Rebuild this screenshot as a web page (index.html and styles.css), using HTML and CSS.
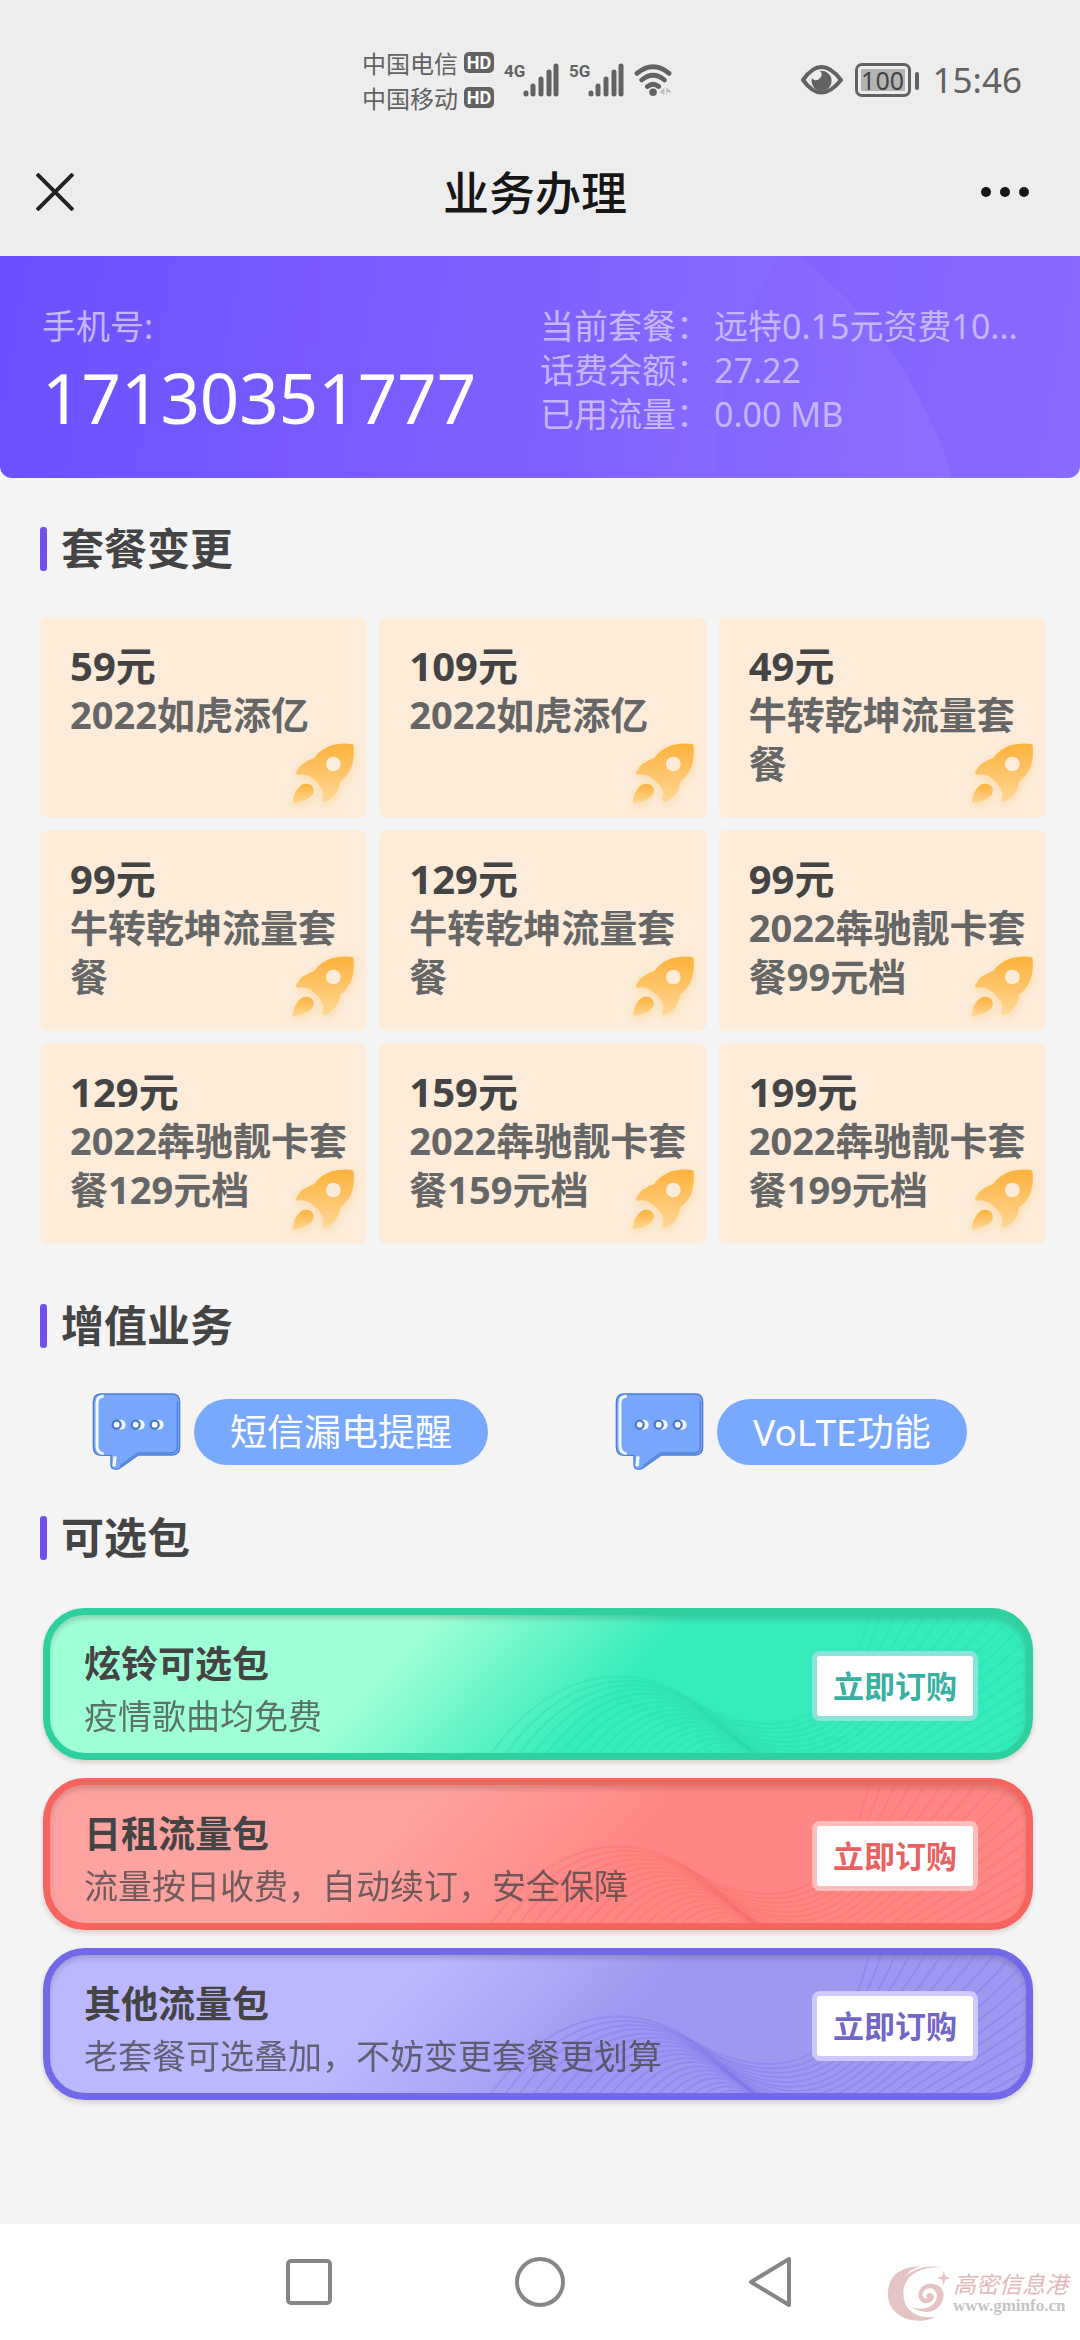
FILE: index.html
```html
<!DOCTYPE html>
<html lang="zh-CN">
<head>
<meta charset="utf-8">
<meta name="viewport" content="width=device-width, initial-scale=1">
<title>业务办理</title>
<link rel="stylesheet" href="styles.css">
</head>
<body>
<svg class="defs" aria-hidden="true">
  <defs>
    <linearGradient id="rocket-fill" x1="0" y1="0" x2="0" y2="1">
      <stop offset="0" stop-color="#fdb23c"/><stop offset="1" stop-color="#ffd694"/>
    </linearGradient>
    <symbol id="rocket" viewBox="60 55 210 201">
      <g fill="url(#rocket-fill)">
        <path d="M246 67Q251 68 251 74Q254 112 243 140Q232 164 210 180Q208 205 192 222Q178 236 164 240Q156 241 157 232Q163 219 158 205Q146 183 118 163Q102 155 84 159Q76 158 79 150Q92 122 133 109Q152 82 185 71Q215 63 246 67Z"/>
        <path d="M76 244Q67 247 69 237Q74 206 94 190Q108 182 123 190Q136 199 129 217Q118 236 76 244Z"/>
      </g>
      <circle cx="190" cy="127" r="22" fill="#fcecd9"/>
    </symbol>
    <symbol id="chat" viewBox="215 310 267 231">
      <path d="M240 313H456Q478 313 478 337V472Q478 496 456 496H354L296 537Q272 543 272 526V497H242Q219 496 219 472V337Q219 315 240 313Z" fill="#78a6fb" stroke="#4b7fd6" stroke-width="4"/>
      <path d="M250 319Q230 320 230 340V468Q230 490 250 492" fill="none" stroke="#f2f8ff" stroke-width="9"/>
      <path d="M284 500L281 530" stroke="#f2f8ff" stroke-width="10"/>
      <path d="M471 334V474Q470 489 452 490H352L300 528" fill="none" stroke="#4f82d8" stroke-width="4"/>
      <g fill="#f2f8ff"><circle cx="301" cy="405" r="15"/><circle cx="358" cy="405" r="15"/><circle cx="415" cy="405" r="15"/></g>
      <g fill="#fff" stroke="#4679d2" stroke-width="7"><circle cx="289" cy="405" r="12"/><circle cx="346" cy="405" r="12"/><circle cx="403" cy="405" r="12"/></g>
    </symbol>
    <symbol id="signal" viewBox="0 0 36 34">
      <g stroke="currentColor" stroke-width="5" stroke-linecap="round"><path d="M3 30V31M10 23V31M18 16V31M26 9V31M33 3V31"/></g>
    </symbol>
  </defs>
</svg>

<div class="page">
  <div class="top">
    <div class="status">
      <div class="carriers">
        <div class="carrier">中国电信<span class="hd">HD</span></div>
        <div class="carrier">中国移动<span class="hd">HD</span></div>
      </div>
      <div class="network"><span class="gen">4G</span><svg class="signal"><use href="#signal"/></svg></div>
      <div class="network"><span class="gen">5G</span><svg class="signal"><use href="#signal"/></svg></div>
      <svg class="wifi" viewBox="0 0 42 36">
        <g fill="none" stroke="#626262" stroke-width="5" stroke-linecap="round"><path d="M3 11Q20 -3 37 11M8 18Q20 8 32 18M14 25Q20 20 26 25"/></g>
        <circle cx="20" cy="31" r="4" fill="#626262"/>
        <path d="M27 31L32 26V34M34 35V26L40 31H35" fill="#bdbdbd"/>
      </svg>
      <div class="status-right">
        <svg class="eye" viewBox="0 0 42 30">
          <path d="M2 15Q20 -11 40 15Q20 40 2 15Z" fill="none" stroke="#626262" stroke-width="4" stroke-linejoin="round"/>
          <path d="M19 6A10 10 0 1 1 11 13Q14 17 18 14Q23 10 19 6Z" fill="#626262"/>
        </svg>
        <div class="battery"><span class="level">100</span></div>
        <span class="clock">15:46</span>
      </div>
    </div>
    <header class="titlebar">
      <button class="icon-btn" aria-label="关闭"><svg width="38" height="38" viewBox="0 0 38 38"><path d="M1 1L37 37M37 1L1 37" stroke="#222" stroke-width="4"/></svg></button>
      <h1 class="title">业务办理</h1>
      <button class="icon-btn more" aria-label="更多"><svg width="50" height="12" viewBox="0 0 50 12"><g fill="#161616"><circle cx="6" cy="6" r="5"/><circle cx="25" cy="6" r="5"/><circle cx="44" cy="6" r="5"/></g></svg></button>
    </header>
  </div>

  <section class="account">
    <svg class="account-art" viewBox="0 0 1080 222" preserveAspectRatio="xMaxYMid slice" aria-hidden="true">
      <defs>
        <linearGradient id="disc" x1="0" y1="0" x2="1" y2="0"><stop offset=".5" stop-color="#fff" stop-opacity="0"/><stop offset="1" stop-color="#fff" stop-opacity=".07"/></linearGradient>
      </defs>
      <circle cx="544" cy="341" r="425" fill="url(#disc)"/>
      <circle cx="1136" cy="222" r="421" fill="#7a58ff" fill-opacity=".14"/>
    </svg>
    <div class="phone">
      <span class="muted">手机号:</span>
      <strong class="number">17130351777</strong>
    </div>
    <dl class="facts muted">
      <dt>当前套餐：</dt><dd>远特0.15元资费10...</dd>
      <dt>话费余额：</dt><dd>27.22</dd>
      <dt>已用流量：</dt><dd>0.00 MB</dd>
    </dl>
  </section>

  <main>
    <h2 class="section-title">套餐变更</h2>
    <div class="plans">
      <button class="plan"><b>59元</b><span>2022如虎添亿</span><svg class="rocket"><use href="#rocket"/></svg></button>
      <button class="plan"><b>109元</b><span>2022如虎添亿</span><svg class="rocket"><use href="#rocket"/></svg></button>
      <button class="plan"><b>49元</b><span>牛转乾坤流量套餐</span><svg class="rocket"><use href="#rocket"/></svg></button>
      <button class="plan"><b>99元</b><span>牛转乾坤流量套餐</span><svg class="rocket"><use href="#rocket"/></svg></button>
      <button class="plan"><b>129元</b><span>牛转乾坤流量套餐</span><svg class="rocket"><use href="#rocket"/></svg></button>
      <button class="plan"><b>99元</b><span>2022犇驰靓卡套餐99元档</span><svg class="rocket"><use href="#rocket"/></svg></button>
      <button class="plan"><b>129元</b><span>2022犇驰靓卡套餐129元档</span><svg class="rocket"><use href="#rocket"/></svg></button>
      <button class="plan"><b>159元</b><span>2022犇驰靓卡套餐159元档</span><svg class="rocket"><use href="#rocket"/></svg></button>
      <button class="plan"><b>199元</b><span>2022犇驰靓卡套餐199元档</span><svg class="rocket"><use href="#rocket"/></svg></button>
    </div>

    <h2 class="section-title">增值业务</h2>
    <div class="services">
      <div class="service"><svg class="chat"><use href="#chat"/></svg><button class="pill">短信漏电提醒</button></div>
      <div class="service"><svg class="chat"><use href="#chat"/></svg><button class="pill">VoLTE功能</button></div>
    </div>

    <h2 class="section-title">可选包</h2>
    <div class="packs">
      <article class="pack green">
        <svg class="waves" viewBox="0 0 976 138" preserveAspectRatio="xMaxYMid slice" aria-hidden="true"></svg>
        <div class="pack-text"><h3>炫铃可选包</h3><p>疫情歌曲均免费</p></div>
        <button class="order">立即订购</button>
      </article>
      <article class="pack red">
        <svg class="waves" viewBox="0 0 976 138" preserveAspectRatio="xMaxYMid slice" aria-hidden="true"></svg>
        <div class="pack-text"><h3>日租流量包</h3><p>流量按日收费，自动续订，安全保障</p></div>
        <button class="order">立即订购</button>
      </article>
      <article class="pack violet">
        <svg class="waves" viewBox="0 0 976 138" preserveAspectRatio="xMaxYMid slice" aria-hidden="true"></svg>
        <div class="pack-text"><h3>其他流量包</h3><p>老套餐可选叠加，不妨变更套餐更划算</p></div>
        <button class="order">立即订购</button>
      </article>
    </div>
  </main>

  <nav class="navbar">
    <button class="icon-btn" aria-label="最近任务"><svg width="54" height="54" viewBox="0 0 54 54"><rect x="6" y="6" width="42" height="42" rx="3" fill="none" stroke="#868686" stroke-width="4"/></svg></button>
    <button class="icon-btn" aria-label="主页"><svg width="54" height="54" viewBox="0 0 54 54"><circle cx="27" cy="27" r="23" fill="none" stroke="#868686" stroke-width="4"/></svg></button>
    <button class="icon-btn" aria-label="返回"><svg width="54" height="54" viewBox="0 0 54 54"><path d="M45 4V50L7 27Z" fill="none" stroke="#868686" stroke-width="4" stroke-linejoin="round"/></svg></button>
    <div class="watermark">
      <svg width="64" height="58" viewBox="0 0 192 172">
        <g fill="#e6c3c3">
          <path d="M100 5Q20 10 6 62Q-10 130 50 160Q100 180 145 158Q80 165 55 120Q35 60 80 28Q120 4 165 10Q120 0 80 20Q60 28 48 44Q68 14 100 5Z"/>
          <path d="M88 5Q30 14 12 52Q40 12 88 5Z"/>
          <path d="M72 128Q130 160 160 122Q184 80 150 62Q118 48 98 76Q86 104 110 116Q134 120 142 98Q138 84 124 86Q114 92 122 102Q106 104 106 90Q112 70 134 72Q156 84 146 110Q124 144 72 128Z"/>
          <path d="M170 20L175 36L190 41L175 46L169 62L166 46L150 41L166 36Z"/>
        </g>
      </svg>
      <div class="wm-text"><span class="wm-name">高密信息港</span><span class="wm-url">www.gminfo.cn</span></div>
    </div>
  </nav>
</div>
<script src="waves.js"></script>
</body>
</html>
```
FILE: styles.css
```css
* { box-sizing: border-box; margin: 0; padding: 0; }
body {
  background: #f4f4f4;
  color: #444;
  font-family: "Noto Sans", "Noto Sans CJK SC", sans-serif;
}
button { font: inherit; color: inherit; border: 0; background: none; cursor: pointer; }
.defs { position: absolute; width: 0; height: 0; }
.page { min-height: 100vh; display: flex; flex-direction: column; }

/* status bar and title */
.top { background: #ededed; }
.status {
  height: 128px;
  padding: 32px 58px 0 362px;
  display: flex;
  align-items: center;
  color: #626262;
}
.carriers { margin-right: 10px; }
.carrier {
  display: flex; align-items: center; gap: 6px;
  font: 24px/35px "Noto Sans CJK SC", sans-serif;
}
.hd {
  width: 30px; height: 21px; border-radius: 5px;
  background: #626262; color: #fff;
  font: bold 18px/21px "Roboto", sans-serif;
  text-align: center;
}
.network { display: flex; align-items: flex-start; margin-right: 10px; }
.gen { width: 19px; font: bold 17px/17px "Roboto", sans-serif; }
.signal { width: 36px; height: 34px; }
.wifi { width: 40px; height: 34px; }
.status-right { margin-left: auto; display: flex; align-items: center; }
.eye { width: 42px; height: 30px; margin-right: 12px; }
.battery {
  position: relative;
  width: 56px; height: 34px; padding: 3px;
  border: 3px solid #626262; border-radius: 7px;
  margin-right: 22px;
}
.battery::after {
  content: ""; position: absolute; right: -11px; top: 6px;
  width: 4px; height: 18px; border-radius: 2px; background: #626262;
}
.level {
  display: block; height: 22px; background: #b4b4b4; color: #444;
  font: 25px/22px "Noto Sans", sans-serif; text-align: center;
}
.clock { font-size: 35px; line-height: 40px; }
.titlebar {
  height: 128px; padding: 0 50px 0 36px;
  display: flex; align-items: center;
}
.icon-btn { display: flex; align-items: center; width: 54px; }
.titlebar .more { width: 50px; }
.title { flex: 1; text-align: center; color: #161616; font-size: 46px; font-weight: 500; line-height: 60px; }

/* account summary */
.account {
  position: relative;
  display: flex;
  padding: 48px 42px;
  height: 222px;
  border-radius: 0 0 12px 12px;
  background: linear-gradient(100deg, #6c50ff, #7c5dff 40%, #8d6dff);
  overflow: hidden;
}
.account-art { position: absolute; inset: 0; width: 100%; height: 100%; }
.phone, .facts { position: relative; width: 50%; font-size: 34px; line-height: 44px; white-space: nowrap; }
.phone { display: flex; flex-direction: column; }
.facts { display: grid; grid-template-columns: auto 1fr; column-gap: 4px; align-content: start; }
.muted { color: #c5b6ff; }
.number { color: #fff; font-size: 69px; font-weight: 400; line-height: 98px; }

/* sections */
.section-title {
  margin-left: 40px;
  display: flex; align-items: center; gap: 14px;
  font-size: 43px; font-weight: 700; line-height: 60px;
}
.section-title::before { content: ""; width: 7px; height: 44px; border-radius: 3px; background: #6f50e8; }
main { padding-top: 41px; }

.plans {
  display: grid; grid-template-columns: repeat(3, 1fr); gap: 12px;
  padding: 38px 34px 52px 40px;
}
.plan {
  position: relative;
  height: 201px; padding: 24px 14px 24px 30px;
  border-radius: 8px; background: #fcecd9;
  display: flex; flex-direction: column;
  text-align: left; font-weight: 700; line-height: 49px;
}
.plan b { font-size: 40px; font-weight: 700; }
.plan span { font-size: 38px; color: #666; }
.rocket {
  position: absolute; right: 7px; bottom: 11px; width: 70px; height: 67px;
  filter: drop-shadow(0 3px 4px rgba(253, 178, 60, .3));
}

.services { display: grid; grid-template-columns: 1fr 1fr; padding: 37px 34px 38px 0; }
.service { display: flex; align-items: center; gap: 13px; padding-left: 92px; }
.chat { width: 89px; height: 77px; }
.pill {
  height: 66px; padding: 0 36px; border-radius: 33px;
  background: #79a8ff; color: #fff; font-size: 37px; line-height: 66px;
}

/* optional packs */
.packs { display: flex; flex-direction: column; gap: 18px; padding: 40px 47px 60px 43px; }
.pack {
  --edge: #2fd0a0; --from: #9fffd6; --to: #34ecbb; --rim: #8be3dd; --ink: #36b0a0;
  position: relative; overflow: hidden;
  display: flex; align-items: center; justify-content: space-between;
  height: 152px; padding: 4px 48px 0 34px;
  border: 7px solid var(--edge); border-radius: 42px;
  background: linear-gradient(133deg, var(--from) 35%, var(--to) 58%);
  box-shadow: 0 3px 5px rgba(90, 60, 20, .18), inset 0 4px 5px rgba(60, 40, 40, .18);
}
.red { --edge: #f66460; --from: #fca3a0; --to: #ff8783; --rim: #ffbdbb; --ink: #e86161; }
.violet { --edge: #7269e8; --from: #bbb8ff; --to: #9f98f0; --rim: #cfc9fa; --ink: #7166c8; }
.waves { position: absolute; inset: 0; width: 100%; height: 100%; fill: none; stroke: var(--edge); stroke-width: 2; stroke-opacity: .28; }
.pack-text, .order { position: relative; }
.pack-text { padding-top: 8px; }
.pack-text h3 { font-size: 37px; line-height: 52px; }
.pack-text p { font-size: 34px; line-height: 52px; color: #444; opacity: .75; }
.order {
  height: 70px; padding: 0 16px; border: 5px solid var(--rim); border-radius: 8px;
  background: #fff; color: var(--ink); font-size: 31px; font-weight: 700; line-height: 60px;
}

/* system navigation */
.navbar {
  position: relative;
  margin-top: auto; height: 116px; background: #fff;
  display: flex; align-items: center; justify-content: center; gap: 177px;
}
.watermark { position: absolute; right: 12px; bottom: 18px; display: flex; align-items: center; gap: 2px; }
.wm-text { display: flex; flex-direction: column; }
.wm-name { font-size: 23px; line-height: 26px; font-style: italic; color: #e2b9b9; }
.wm-url { font: bold 17px/18px "Liberation Serif", serif; color: #c4c4c4; }
```
FILE: waves.js
```javascript
// Fills each pack with a mesh of lines blended between two curves.
const upper = [430, 155, 490, 60, 570, 40, 640, 84, 700, 122, 770, 120, 800, 55, 813, 27, 820, 5, 824, -40];
const lower = [650, 330, 660, 200, 690, 120, 740, 170, 783, 208, 790, 244, 900, 200, 950, 180, 1080, 120, 1180, 60];
const count = 24;
for (const svg of document.querySelectorAll(".waves")) {
  for (let i = 0; i < count; i++) {
    const t = i / (count - 1);
    const p = upper.map((v, k) => Math.round(v + (lower[k] - v) * t));
    const line = document.createElementNS("http://www.w3.org/2000/svg", "path");
    line.setAttribute("d", `M${p.slice(0, 2)}C${p.slice(2, 8)}C${p.slice(8, 14)}C${p.slice(14)}`);
    svg.append(line);
  }
}
```
